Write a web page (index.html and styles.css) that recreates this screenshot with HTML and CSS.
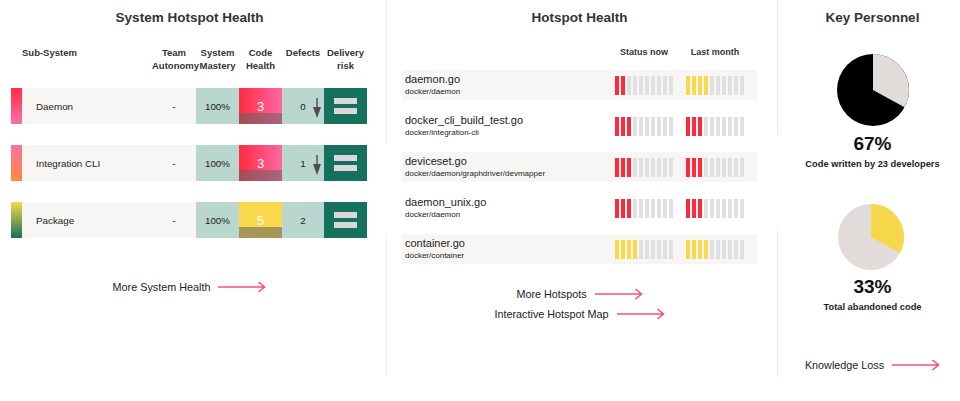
FILE: index.html
```html
<!DOCTYPE html>
<html>
<head>
<meta charset="utf-8">
<title>Hotspot Health</title>
<link rel="stylesheet" href="styles.css">
</head>
<body>
<div class="page">
  <section class="panel panel-system">
    <h2 class="panel-title">System Hotspot Health</h2>
    <div class="sys-table">
      <div class="sys-grid sys-head">
        <div></div>
        <div class="h-name">Sub-System</div>
        <div class="h-col">Team<br>Autonomy</div>
        <div class="h-col">System<br>Mastery</div>
        <div class="h-col">Code<br>Health</div>
        <div class="h-col">Defects</div>
        <div class="h-col">Delivery<br>risk</div>
      </div>
      <div class="sys-rows">
        <div class="sys-grid sys-row">
          <div class="tag tag-daemon"></div>
          <div class="c-name">Daemon</div>
          <div class="c-auto">-</div>
          <div class="c-mastery">100%</div>
          <div class="c-health health-red"><span>3</span></div>
          <div class="c-defects">0<svg class="down" width="8" height="20" viewBox="0 0 8 20"><path d="M4 0V10" stroke="#4d4d4d" stroke-width="1.4"/><path d="M0 9H8L4 20Z" fill="#4d4d4d"/></svg></div>
          <div class="c-risk"><i></i><i></i></div>
        </div>
        <div class="sys-grid sys-row">
          <div class="tag tag-cli"></div>
          <div class="c-name">Integration CLI</div>
          <div class="c-auto">-</div>
          <div class="c-mastery">100%</div>
          <div class="c-health health-red"><span>3</span></div>
          <div class="c-defects">1<svg class="down" width="8" height="20" viewBox="0 0 8 20"><path d="M4 0V10" stroke="#4d4d4d" stroke-width="1.4"/><path d="M0 9H8L4 20Z" fill="#4d4d4d"/></svg></div>
          <div class="c-risk"><i></i><i></i></div>
        </div>
        <div class="sys-grid sys-row">
          <div class="tag tag-package"></div>
          <div class="c-name">Package</div>
          <div class="c-auto">-</div>
          <div class="c-mastery">100%</div>
          <div class="c-health health-yellow"><span>5</span></div>
          <div class="c-defects">2</div>
          <div class="c-risk"><i></i><i></i></div>
        </div>
      </div>
    </div>
    <div class="links links-system">
      <a class="more-link">More System Health<svg width="48" height="12" viewBox="0 0 48 12"><path d="M0 6H46.5M40.5 1L46.5 6L40.5 11" fill="none" stroke="#f2527b" stroke-width="1.6"/></svg></a>
    </div>
  </section>

  <div class="divider divider-a"></div>

  <section class="panel panel-hotspot">
    <h2 class="panel-title">Hotspot Health</h2>
    <div class="hs-grid hs-head">
      <div></div>
      <div class="h-col">Status now</div>
      <div class="h-col">Last month</div>
    </div>
    <div class="hs-rows">
      <div class="hs-grid hs-row shaded">
        <div class="hs-file"><div class="hs-name">daemon.go</div><div class="hs-path">docker/daemon</div></div>
        <div class="bars"><i class="r"></i><i class="r"></i><i></i><i></i><i></i><i></i><i></i><i></i><i></i><i></i></div>
        <div class="bars"><i class="y"></i><i class="y"></i><i class="y"></i><i class="y"></i><i></i><i></i><i></i><i></i><i></i><i></i></div>
      </div>
      <div class="hs-grid hs-row">
        <div class="hs-file"><div class="hs-name">docker_cli_build_test.go</div><div class="hs-path">docker/integration-cli</div></div>
        <div class="bars"><i class="r"></i><i class="r"></i><i class="r"></i><i></i><i></i><i></i><i></i><i></i><i></i><i></i></div>
        <div class="bars"><i class="r"></i><i class="r"></i><i class="r"></i><i></i><i></i><i></i><i></i><i></i><i></i><i></i></div>
      </div>
      <div class="hs-grid hs-row shaded">
        <div class="hs-file"><div class="hs-name">deviceset.go</div><div class="hs-path">docker/daemon/graphdriver/devmapper</div></div>
        <div class="bars"><i class="r"></i><i class="r"></i><i class="r"></i><i></i><i></i><i></i><i></i><i></i><i></i><i></i></div>
        <div class="bars"><i class="r"></i><i class="r"></i><i class="r"></i><i></i><i></i><i></i><i></i><i></i><i></i><i></i></div>
      </div>
      <div class="hs-grid hs-row">
        <div class="hs-file"><div class="hs-name">daemon_unix.go</div><div class="hs-path">docker/daemon</div></div>
        <div class="bars"><i class="r"></i><i class="r"></i><i class="r"></i><i></i><i></i><i></i><i></i><i></i><i></i><i></i></div>
        <div class="bars"><i class="r"></i><i class="r"></i><i class="r"></i><i></i><i></i><i></i><i></i><i></i><i></i><i></i></div>
      </div>
      <div class="hs-grid hs-row shaded">
        <div class="hs-file"><div class="hs-name">container.go</div><div class="hs-path">docker/container</div></div>
        <div class="bars"><i class="y"></i><i class="y"></i><i class="y"></i><i class="y"></i><i></i><i></i><i></i><i></i><i></i><i></i></div>
        <div class="bars"><i class="y"></i><i class="y"></i><i class="y"></i><i class="y"></i><i></i><i></i><i></i><i></i><i></i><i></i></div>
      </div>
    </div>
    <div class="links links-hotspot">
      <a class="more-link">More Hotspots<svg width="48" height="12" viewBox="0 0 48 12"><path d="M0 6H46.5M40.5 1L46.5 6L40.5 11" fill="none" stroke="#f2527b" stroke-width="1.6"/></svg></a>
      <a class="more-link">Interactive Hotspot Map<svg width="48" height="12" viewBox="0 0 48 12"><path d="M0 6H46.5M40.5 1L46.5 6L40.5 11" fill="none" stroke="#f2527b" stroke-width="1.6"/></svg></a>
    </div>
  </section>

  <div class="divider divider-b"></div>

  <section class="panel panel-people">
    <h2 class="panel-title">Key Personnel</h2>
    <svg class="pie pie-one" width="72" height="72" viewBox="0 0 72 72">
      <circle cx="36" cy="36" r="36" fill="#000"/>
      <path d="M36 36L36 0A36 36 0 0 1 67.5 53.3Z" fill="#e1dcda"/>
    </svg>
    <div class="big-pct pct-one">67%</div>
    <div class="caption">Code written by 23 developers</div>
    <svg class="pie pie-two" width="66" height="66" viewBox="0 0 66 66">
      <circle cx="33" cy="33" r="33" fill="#e1dcda"/>
      <path d="M33 33L33 0A33 33 0 0 1 61.9 48.9Z" fill="#f8d84b"/>
    </svg>
    <div class="big-pct pct-two">33%</div>
    <div class="caption">Total abandoned code</div>
    <div class="links links-people">
      <a class="more-link">Knowledge Loss<svg width="48" height="12" viewBox="0 0 48 12"><path d="M0 6H46.5M40.5 1L46.5 6L40.5 11" fill="none" stroke="#f2527b" stroke-width="1.6"/></svg></a>
    </div>
  </section>
</div>
</body>
</html>
```

FILE: styles.css
```css
* { box-sizing: border-box; }

html, body {
  margin: 0;
  padding: 0;
  background: #ffffff;
}

body {
  font-family: "Liberation Sans", Arial, sans-serif;
  color: #222222;
}

.page {
  display: grid;
  grid-template-columns: 386px 1px 390px 1px 1fr;
  width: 960px;
  height: 401px;
}

.panel {
  display: flex;
  flex-direction: column;
}

.panel-title {
  margin: 8px 0 0;
  font-size: 13.5px;
  line-height: 20px;
  font-weight: 700;
  text-align: center;
  color: #333333;
}

.divider {
  width: 1px;
  height: 380px;
}

.divider-a {
  background: linear-gradient(#ececec 0 143px, transparent 143px 235px, #ececec 235px 376px, transparent 376px);
}

.divider-b {
  background: linear-gradient(#ececec 0 135px, transparent 135px 227px, #ececec 227px 377px, transparent 377px);
}

/* ---------- System hotspot table ---------- */
.panel-system {
  padding-right: 7px;
}

.sys-table {
  margin-left: 11px;
  width: 356px;
}

.sys-grid {
  display: grid;
  grid-template-columns: 11px 130px 44px 43px 43px 42px 43px;
}

.sys-head {
  margin-top: 18px;
  font-size: 9.5px;
  line-height: 13px;
  font-weight: 700;
  color: #333333;
}

.h-col {
  text-align: center;
  white-space: nowrap;
}

.h-name {
  white-space: nowrap;
}

.sys-rows {
  margin-top: 16px;
  display: flex;
  flex-direction: column;
  gap: 21px;
}

.sys-row {
  height: 36px;
  font-size: 9.8px;
  color: #222222;
}

.sys-row > div {
  display: flex;
  align-items: center;
}

.tag-daemon { background: linear-gradient(#ff2d44, #ff6eab); }
.tag-cli { background: linear-gradient(#ff70a2, #ff8a3b); }
.tag-package { background: linear-gradient(#f4dc49, #176f5a); }

.c-name {
  background: #f7f6f4;
  padding-left: 14px;
}

.c-auto {
  background: #f7f6f4;
  justify-content: center;
}

.c-mastery {
  background: #b9d6cf;
  justify-content: center;
  font-size: 9.8px;
}

.c-health {
  position: relative;
  justify-content: center;
  color: #ffffff;
  font-size: 13px;
}

.c-health span {
  position: relative;
  z-index: 1;
}

.c-health::after {
  content: "";
  position: absolute;
  left: 0;
  right: 0;
  bottom: 0;
  height: 11px;
  background: rgba(100, 100, 100, 0.56);
}

.health-red { background: linear-gradient(90deg, #ff2b40, #ff68a3); }
.health-yellow { background: #f9d84b; }

.c-defects {
  position: relative;
  background: #b9d6cf;
  justify-content: center;
  font-size: 9.8px;
}

.down {
  position: absolute;
  left: 31px;
  top: 10px;
}

.c-risk {
  background: #15705d;
  flex-direction: column;
  justify-content: center;
  gap: 4px;
}

.c-risk i {
  display: block;
  width: 23px;
  height: 6px;
  background: #d9d9d9;
}

/* ---------- Links ---------- */
.links {
  display: flex;
  flex-direction: column;
  align-items: center;
  gap: 6px;
}

.more-link {
  display: flex;
  align-items: center;
  gap: 8px;
  font-size: 10.8px;
  line-height: 14px;
  color: #222222;
  white-space: nowrap;
}

.links-system {
  margin-top: 42px;
}

.links-hotspot {
  margin-top: 23px;
}

/* ---------- Hotspot list ---------- */
.panel-hotspot {
  padding: 0 20px 0 15px;
}

.hs-grid {
  display: grid;
  grid-template-columns: 1fr 58px 58px;
  column-gap: 13px;
  padding-right: 13px;
}

.hs-head {
  margin-top: 18px;
  font-size: 9px;
  line-height: 12px;
  font-weight: 700;
  color: #333333;
}

.hs-rows {
  margin-top: 12px;
  display: flex;
  flex-direction: column;
  gap: 11px;
}

.hs-row {
  height: 30px;
  align-items: center;
}

.hs-row.shaded {
  background: #f7f6f4;
}

.hs-file {
  align-self: start;
  padding: 3px 0 0 3px;
}

.hs-name {
  font-size: 11px;
  line-height: 13px;
  color: #222222;
}

.hs-path {
  margin-top: 1px;
  font-size: 8px;
  line-height: 10px;
  color: #222222;
}

.bars {
  display: flex;
  gap: 2px;
}

.bars i {
  display: block;
  width: 4px;
  height: 19px;
  background: #e0e0e0;
}

.bars i.r { background: #ff2b3d; }
.bars i.y { background: #f9d84b; }

/* ---------- Key personnel ---------- */
.panel-people {
  padding-left: 7px;
  align-items: center;
}

.pie {
  display: block;
}

.pie-one {
  margin-top: 26px;
}

.big-pct {
  font-size: 19px;
  line-height: 22px;
  font-weight: 700;
  color: #111111;
}

.pct-one {
  margin-top: 7px;
}

.caption {
  margin-top: 3px;
  font-size: 9.3px;
  line-height: 12px;
  font-weight: 700;
  color: #222222;
  white-space: nowrap;
}

.pie-two {
  margin-top: 34px;
  margin-left: -3px;
}

.pct-two {
  margin-top: 6px;
}

.links-people {
  margin-top: 45px;
}
```
